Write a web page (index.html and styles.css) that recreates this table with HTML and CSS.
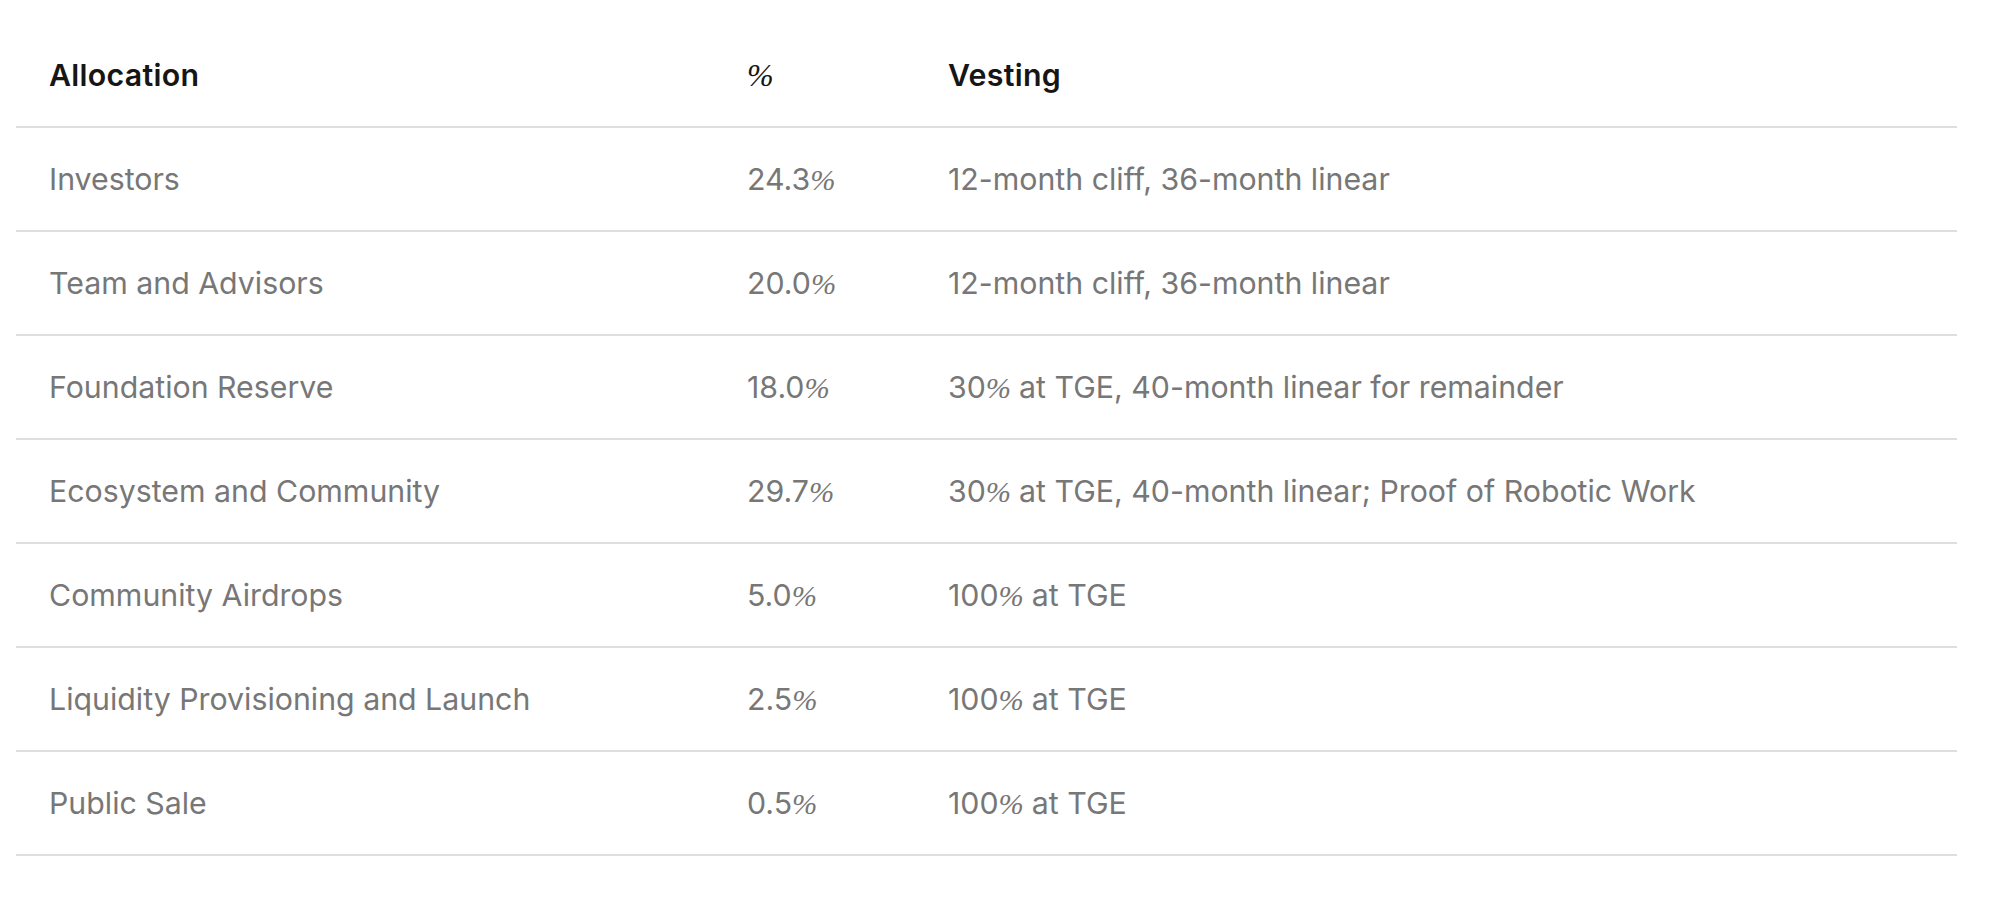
FILE: index.html
```html
<!DOCTYPE html>
<html lang="en">
<head>
<meta charset="utf-8">
<title>Token Allocation</title>
<link rel="stylesheet" href="styles.css">
</head>
<body>
<div class="page">
  <div class="table" role="table">
    <div class="row head" role="row">
      <div class="cell" role="columnheader">Allocation</div>
      <div class="cell" role="columnheader"><span class="pct">%</span></div>
      <div class="cell" role="columnheader">Vesting</div>
    </div>
    <div class="row" role="row">
      <div class="cell">Investors</div>
      <div class="cell">24.3<span class="pct">%</span></div>
      <div class="cell">12-month cliff, 36-month linear</div>
    </div>
    <div class="row" role="row">
      <div class="cell">Team and Advisors</div>
      <div class="cell">20.0<span class="pct">%</span></div>
      <div class="cell">12-month cliff, 36-month linear</div>
    </div>
    <div class="row" role="row">
      <div class="cell">Foundation Reserve</div>
      <div class="cell">18.0<span class="pct">%</span></div>
      <div class="cell">30<span class="pct">%</span> at TGE, 40-month linear for remainder</div>
    </div>
    <div class="row" role="row">
      <div class="cell">Ecosystem and Community</div>
      <div class="cell">29.7<span class="pct">%</span></div>
      <div class="cell">30<span class="pct">%</span> at TGE, 40-month linear; Proof of Robotic Work</div>
    </div>
    <div class="row" role="row">
      <div class="cell">Community Airdrops</div>
      <div class="cell">5.0<span class="pct">%</span></div>
      <div class="cell">100<span class="pct">%</span> at TGE</div>
    </div>
    <div class="row" role="row">
      <div class="cell">Liquidity Provisioning and Launch</div>
      <div class="cell">2.5<span class="pct">%</span></div>
      <div class="cell">100<span class="pct">%</span> at TGE</div>
    </div>
    <div class="row" role="row">
      <div class="cell">Public Sale</div>
      <div class="cell">0.5<span class="pct">%</span></div>
      <div class="cell">100<span class="pct">%</span> at TGE</div>
    </div>
  </div>
</div>
</body>
</html>
```
FILE: styles.css
```css
html, body {
  margin: 0;
  padding: 0;
  background: #ffffff;
}

.page {
  padding: 24px 55px 0 16px;
  font-family: "Inter", "Liberation Sans", sans-serif;
}

.table {
  display: flex;
  flex-direction: column;
}

.row {
  display: grid;
  grid-template-columns: 698px 201px 1fr;
  height: 102px;
  align-items: center;
  border-bottom: 2px solid #dedede;
  font-size: 30.3px;
  color: #777777;
  font-weight: 400;
}

.row.head {
  color: #161616;
  font-weight: 600;
  letter-spacing: 0.3px;
}

.cell {
  padding-left: 33px;
  white-space: nowrap;
}

.pct {
  font-family: "Liberation Serif", "DejaVu Serif", serif;
  font-style: italic;
  font-weight: 400;
  letter-spacing: -0.5px;
}

.head .pct {
  font-size: 32px;
}
```
